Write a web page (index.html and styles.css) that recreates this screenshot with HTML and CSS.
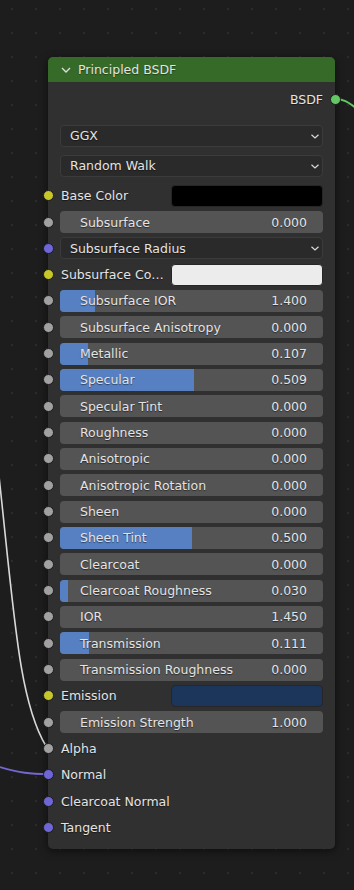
FILE: index.html
```html
<!DOCTYPE html>
<html lang="en">
<head>
    <meta charset="UTF-8">
    <meta name="viewport" content="width=device-width, initial-scale=1.0">
    <title>Principled BSDF</title>
    <link rel="stylesheet" href="styles.css">
</head>
<body>
    <div class="editor">
        <svg class="wires" width="354" height="890" viewBox="0 0 354 890">
            <path d="M -3 458 C 14 610, 18 700, 46 746" stroke="#d9d9d9" stroke-width="1.6" fill="none"/>
            <path d="M 0 767 C 20 773, 30 774, 48 774" stroke="#7467d0" stroke-width="1.8" fill="none"/>
            <path d="M 335 99 C 345 99, 349 103, 356 108" stroke="#63c763" stroke-width="2" fill="none"/>
        </svg>

        <div class="node">
            <div class="node-header">
                <svg class="collapse" width="10" height="6" viewBox="0 0 10 6">
                    <polyline points="1,1 5,5 9,1" fill="none" stroke="#e0e0e0" stroke-width="1.3"/>
                </svg>
                <span>Principled BSDF</span>
            </div>
            <div class="node-body">
                <div class="row output">
                    <span class="label">BSDF</span>
                    <span class="socket out shader"></span>
                </div>
                <div class="row mode">
                    <div class="dropdown"><span>GGX</span><svg class="chev" width="8" height="5" viewBox="0 0 8 5"><polyline points="0.5,0.8 4,4 7.5,0.8" fill="none" stroke="#dcdcdc" stroke-width="1.2"/></svg></div>
                </div>
                <div class="row mode">
                    <div class="dropdown"><span>Random Walk</span><svg class="chev" width="8" height="5" viewBox="0 0 8 5"><polyline points="0.5,0.8 4,4 7.5,0.8" fill="none" stroke="#dcdcdc" stroke-width="1.2"/></svg></div>
                </div>

                <div class="row">
                    <span class="socket color"></span>
                    <span class="label color-label">Base Color</span>
                    <span class="swatch" style="background: #000000;"></span>
                </div>
                <div class="row">
                    <span class="socket"></span>
                    <div class="slider"><span class="name">Subsurface</span><span class="value">0.000</span></div>
                </div>
                <div class="row">
                    <span class="socket vector"></span>
                    <div class="dropdown"><span>Subsurface Radius</span><svg class="chev" width="8" height="5" viewBox="0 0 8 5"><polyline points="0.5,0.8 4,4 7.5,0.8" fill="none" stroke="#dcdcdc" stroke-width="1.2"/></svg></div>
                </div>
                <div class="row">
                    <span class="socket color"></span>
                    <span class="label color-label">Subsurface Co…</span>
                    <span class="swatch" style="background: #ececec;"></span>
                </div>
                <div class="row">
                    <span class="socket"></span>
                    <div class="slider"><span class="fill" style="width: 13.3%;"></span><span class="name">Subsurface IOR</span><span class="value">1.400</span></div>
                </div>
                <div class="row">
                    <span class="socket"></span>
                    <div class="slider"><span class="name">Subsurface Anisotropy</span><span class="value">0.000</span></div>
                </div>
                <div class="row">
                    <span class="socket"></span>
                    <div class="slider"><span class="fill" style="width: 10.7%;"></span><span class="name">Metallic</span><span class="value">0.107</span></div>
                </div>
                <div class="row">
                    <span class="socket"></span>
                    <div class="slider"><span class="fill" style="width: 50.9%;"></span><span class="name">Specular</span><span class="value">0.509</span></div>
                </div>
                <div class="row">
                    <span class="socket"></span>
                    <div class="slider"><span class="name">Specular Tint</span><span class="value">0.000</span></div>
                </div>
                <div class="row">
                    <span class="socket"></span>
                    <div class="slider"><span class="name">Roughness</span><span class="value">0.000</span></div>
                </div>
                <div class="row">
                    <span class="socket"></span>
                    <div class="slider"><span class="name">Anisotropic</span><span class="value">0.000</span></div>
                </div>
                <div class="row">
                    <span class="socket"></span>
                    <div class="slider"><span class="name">Anisotropic Rotation</span><span class="value">0.000</span></div>
                </div>
                <div class="row">
                    <span class="socket"></span>
                    <div class="slider"><span class="name">Sheen</span><span class="value">0.000</span></div>
                </div>
                <div class="row">
                    <span class="socket"></span>
                    <div class="slider"><span class="fill" style="width: 50%;"></span><span class="name">Sheen Tint</span><span class="value">0.500</span></div>
                </div>
                <div class="row">
                    <span class="socket"></span>
                    <div class="slider"><span class="name">Clearcoat</span><span class="value">0.000</span></div>
                </div>
                <div class="row">
                    <span class="socket"></span>
                    <div class="slider"><span class="fill" style="width: 3%;"></span><span class="name">Clearcoat Roughness</span><span class="value">0.030</span></div>
                </div>
                <div class="row">
                    <span class="socket"></span>
                    <div class="slider"><span class="name">IOR</span><span class="value">1.450</span></div>
                </div>
                <div class="row">
                    <span class="socket"></span>
                    <div class="slider"><span class="fill" style="width: 11.1%;"></span><span class="name">Transmission</span><span class="value">0.111</span></div>
                </div>
                <div class="row">
                    <span class="socket"></span>
                    <div class="slider"><span class="name">Transmission Roughness</span><span class="value">0.000</span></div>
                </div>
                <div class="row">
                    <span class="socket color"></span>
                    <span class="label color-label">Emission</span>
                    <span class="swatch" style="background: #1c355a;"></span>
                </div>
                <div class="row">
                    <span class="socket"></span>
                    <div class="slider"><span class="name">Emission Strength</span><span class="value">1.000</span></div>
                </div>
                <div class="row">
                    <span class="socket"></span>
                    <span class="label">Alpha</span>
                </div>
                <div class="row">
                    <span class="socket vector"></span>
                    <span class="label">Normal</span>
                </div>
                <div class="row">
                    <span class="socket vector"></span>
                    <span class="label">Clearcoat Normal</span>
                </div>
                <div class="row">
                    <span class="socket vector"></span>
                    <span class="label">Tangent</span>
                </div>
            </div>
        </div>
    </div>
</body>
</html>
```

FILE: styles.css
```css
body {
    margin: 0;
    background-color: #1d1d1d;
    font-family: 'DejaVu Sans', 'Liberation Sans', sans-serif;
    font-size: 12.5px;
    color: #e4e4e4;
}
.editor {
    position: relative;
    width: 354px;
    height: 890px;
    overflow: hidden;
    padding-top: 57px;
    box-sizing: border-box;
    background-image: radial-gradient(circle, #2b2b2b 1px, transparent 1.4px);
    background-size: 24px 24px;
    background-position: 0px -3px;
}
.wires {
    position: absolute; /* wires lie over the canvas */
    top: 0;
    left: 0;
}
.node {
    position: relative;
    margin-left: 48px;
    width: 287px;
    background-color: #303030;
    border-radius: 5px;
    box-shadow: 0 2px 8px rgba(0, 0, 0, 0.55);
}
.node-header {
    display: flex;
    align-items: center;
    gap: 7px;
    height: 25px;
    padding-left: 13px;
    background-color: #366a29;
    border-radius: 5px 5px 0 0;
    text-shadow: 0 1px 1px rgba(0, 0, 0, 0.4);
}
.node-body {
    display: flex;
    flex-direction: column;
    gap: 4.33px;
    padding: 6.5px 0 10px 0;
}
.row {
    position: relative;
    display: flex;
    align-items: center;
    height: 22px;
    padding: 0 12px;
}
.row.output {
    justify-content: flex-end;
    margin-bottom: 10px;
}
.row.mode {
    margin-bottom: 3.6px;
}
.label {
    padding-left: 1px;
    text-shadow: 0 1px 1px rgba(0, 0, 0, 0.5);
    white-space: nowrap;
}
.color-label {
    width: 110px;
    flex: none;
}
.socket {
    position: absolute; /* sits over the node edge */
    left: -5.5px;
    top: 5.5px;
    width: 11px;
    height: 11px;
    box-sizing: border-box;
    border-radius: 50%;
    background-color: #a1a1a1;
    border: 1px solid #1c1c1c;
}
.socket.out {
    left: auto;
    right: -5.5px;
}
.socket.shader {
    background-color: #63c763;
}
.socket.color {
    background-color: #c7c729;
}
.socket.vector {
    background-color: #6f66d6;
}
.swatch {
    flex: 1;
    height: 22px;
    border-radius: 4px;
    box-sizing: border-box;
    border: 1px solid #262626;
}
.dropdown {
    flex: 1;
    display: flex;
    align-items: center;
    justify-content: space-between;
    height: 22px;
    box-sizing: border-box;
    padding: 0 3px 0 9px;
    background-color: #2a2a2a;
    border: 1px solid #3b3b3b;
    border-radius: 4px;
    text-shadow: 0 1px 1px rgba(0, 0, 0, 0.5);
}
.chev {
    margin-top: 1px;
}
.slider {
    position: relative;
    flex: 1;
    display: flex;
    align-items: center;
    justify-content: space-between;
    height: 22px;
    box-sizing: border-box;
    padding: 0 16px 0 20px;
    background-color: #545454;
    border-radius: 4px;
    overflow: hidden;
    text-shadow: 0 1px 1px rgba(0, 0, 0, 0.5);
    white-space: nowrap;
}
.fill {
    position: absolute; /* value bar under the text */
    left: 0;
    top: 0;
    bottom: 0;
    background-color: #5680c2;
}
.name,
.value {
    position: relative;
}
```
